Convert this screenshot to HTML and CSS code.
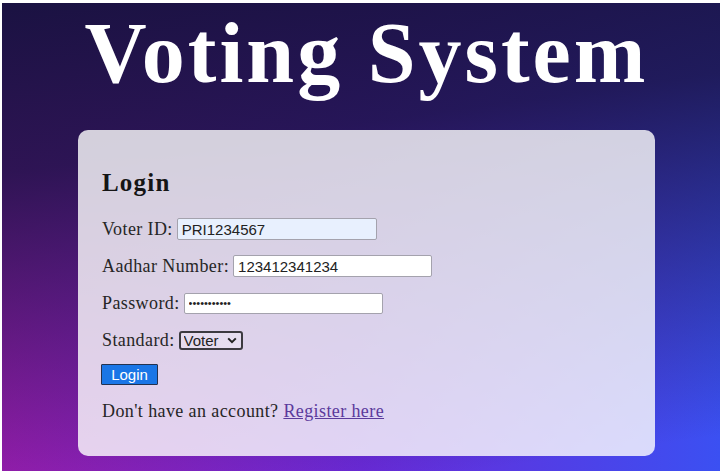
FILE: index.html
```html
<!DOCTYPE html>
<html lang="en">
<head>
<meta charset="utf-8">
<title>Voting System</title>
<link rel="stylesheet" href="styles.css">
</head>
<body>
<div class="page">
  <div class="wrap">
    <h1 class="title">Voting System</h1>
    <div class="card">
      <h2 class="card-title">Login</h2>
      <form class="form">
        <div class="row">
          <label class="label" for="vid">Voter ID:</label>
          <input class="field field-auto" id="vid" type="text" value="PRI1234567">
        </div>
        <div class="row">
          <label class="label" for="aad">Aadhar Number:</label>
          <input class="field" id="aad" type="text" value="123412341234">
        </div>
        <div class="row">
          <label class="label" for="pwd">Password:</label>
          <input class="field field-pwd" id="pwd" type="password" value="abcdefghijk">
        </div>
        <div class="row">
          <label class="label" for="std">Standard:</label>
          <select class="select" id="std"><option>Voter</option><option>Admin</option></select>
        </div>
        <div class="row row-btn">
          <button class="btn" type="button">Login</button>
        </div>
        <p class="foot">Don't have an account? <a class="link" href="#">Register here</a></p>
      </form>
    </div>
  </div>
</div>
</body>
</html>
```
FILE: styles.css
```css
html {
  background: #ffffff;
}
body {
  margin: 3px 0 0 2px;
}
.page {
  height: 468px;
  overflow: hidden;
  background:
    linear-gradient(172deg, rgba(26, 18, 66, 1) 0%, rgba(26, 18, 66, 0.85) 30%, rgba(26, 18, 66, 0) 94%),
    linear-gradient(90deg, #a51fbb 0%, #6a2ad8 50%, #3b50f2 100%);
  font-family: "Liberation Serif", "Times New Roman", serif;
}
.wrap {
  margin-left: 76px;
  width: 577px;
}
.title {
  margin: 0;
  padding-top: 2px;
  font-size: 86px;
  line-height: 96px;
  letter-spacing: 3px;
  font-weight: bold;
  color: #ffffff;
  text-align: center;
}
.card {
  margin-top: 29px;
  height: 326px;
  box-sizing: border-box;
  background: rgba(255, 255, 255, 0.8);
  border-radius: 10px;
  padding: 38px 0 0 24px;
}
.card-title {
  margin: 0 0 20px 0;
  font-size: 25px;
  line-height: 30px;
  letter-spacing: 1.2px;
  font-weight: bold;
  color: #151515;
}
.form {
  display: flex;
  flex-direction: column;
  gap: 15px;
  margin: 0;
}
.row {
  display: flex;
  align-items: center;
  height: 22px;
}
.label {
  font-size: 18px;
  line-height: 22px;
  letter-spacing: 0.4px;
  color: #262626;
  margin-right: 4px;
}
.field {
  box-sizing: border-box;
  width: 199px;
  height: 22px;
  border: 1px solid #a4a2ad;
  border-radius: 2px;
  background: #ffffff;
  padding: 0 4px;
  font-family: "Liberation Sans", Arial, sans-serif;
  font-size: 15px;
  color: #222;
}
.field-auto {
  background: #e8f0fe;
  width: 200px;
}
.field-pwd {
  height: 21px;
  font-size: 11px;
  letter-spacing: 0;
}
.select {
  -webkit-appearance: none;
  appearance: none;
  box-sizing: border-box;
  width: 64px;
  height: 19px;
  border: 2px solid #3c3a40;
  border-radius: 3px;
  padding: 0 0 0 3px;
  font-family: "Liberation Sans", Arial, sans-serif;
  font-size: 15px;
  line-height: 15px;
  color: #222;
  background-color: rgba(255, 255, 255, 0.25);
  background-image: url("data:image/svg+xml,%3Csvg xmlns='http://www.w3.org/2000/svg' width='10' height='7' viewBox='0 0 10 7'%3E%3Cpath d='M1.2 1.4 5 5.2 8.8 1.4' fill='none' stroke='%23222' stroke-width='2'/%3E%3C/svg%3E");
  background-repeat: no-repeat;
  background-position: right 4px center;
}
.row-btn {
  margin-top: -3px;
}
.btn {
  box-sizing: border-box;
  width: 57px;
  height: 21px;
  margin-left: -1px;
  padding: 0;
  border: 1px solid #24324f;
  border-radius: 1px;
  background: #1a76e6;
  color: #ffffff;
  font-family: "Liberation Sans", Arial, sans-serif;
  font-size: 15px;
  line-height: 19px;
}
.foot {
  margin: 0;
  font-size: 18px;
  line-height: 22px;
  letter-spacing: 0.4px;
  color: #262626;
}
.link {
  color: #5b3a9c;
  text-decoration: underline;
}
```
